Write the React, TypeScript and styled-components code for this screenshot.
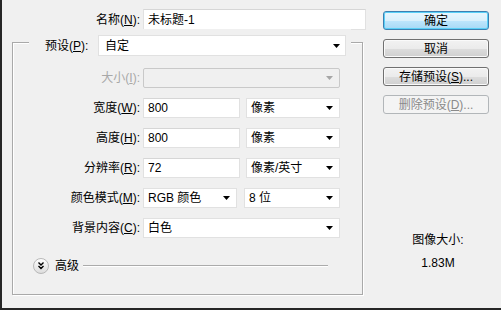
import React from "react";
import styled, { createGlobalStyle } from "styled-components";

const GlobalStyle = createGlobalStyle`
  html, body {
    margin: 0;
    padding: 0;
    background: #f0f0f0;
  }
  body {
    font-family: "Liberation Sans", "Noto Sans CJK SC", sans-serif;
    font-size: 12px;
    color: #000;
  }
`;

const Arrow = ({ disabled }: { disabled?: boolean }) => (
  <svg width="7" height="4" viewBox="0 0 7 4">
    <polygon points="0,0 7,0 3.5,4" fill={disabled ? "#a6a6a6" : "#000"} />
  </svg>
);

const AdvancedIcon = () => (
  <svg width="16" height="16" viewBox="0 0 16 16">
    <defs>
      <linearGradient id="adv" x1="0" y1="0" x2="0" y2="1">
        <stop offset="0" stopColor="#ffffff" />
        <stop offset="1" stopColor="#dcdcdc" />
      </linearGradient>
    </defs>
    <circle cx="8" cy="8" r="7.5" fill="url(#adv)" stroke="#b8b8b8" />
    <path d="M5.5 4.5 L8 7 L10.5 4.5 M5.5 8 L8 10.5 L10.5 8" fill="none" stroke="#000" strokeWidth="1.4" />
  </svg>
);

const Select = ({ value, disabled }: { value?: string; disabled?: boolean }) => (
  <SelectBox $disabled={disabled}>
    <SelectText>{value}</SelectText>
    <Arrow disabled={disabled} />
  </SelectBox>
);

export default function App() {
  return (
    <>
      <GlobalStyle />
      <Window>
        <LeftColumn>
          <NameRow>
            <Label>
              名称(<u>N</u>):
            </Label>
            <TextField>未标题-1</TextField>
          </NameRow>

          <GroupBox>
            <PresetLegend>
              <LegendLabel>
                预设(<u>P</u>):
              </LegendLabel>
              <PresetSelect>
                <SelectText>自定</SelectText>
                <Arrow />
              </PresetSelect>
            </PresetLegend>

            <FormGrid>
              <Label $disabled>
                大小(<u>I</u>):
              </Label>
              <Select disabled />

              <Label>
                宽度(<u>W</u>):
              </Label>
              <FieldPair $first={97} $gap={6}>
                <TextField>800</TextField>
                <Select value="像素" />
              </FieldPair>

              <Label>
                高度(<u>H</u>):
              </Label>
              <FieldPair $first={97} $gap={6}>
                <TextField>800</TextField>
                <Select value="像素" />
              </FieldPair>

              <Label>
                分辨率(<u>R</u>):
              </Label>
              <FieldPair $first={97} $gap={6}>
                <TextField>72</TextField>
                <Select value="像素/英寸" />
              </FieldPair>

              <Label>
                颜色模式(<u>M</u>):
              </Label>
              <FieldPair $first={94} $gap={7}>
                <Select value="RGB 颜色" />
                <Select value="8 位" />
              </FieldPair>

              <Label>
                背景内容(<u>C</u>):
              </Label>
              <Select value="白色" />

              <AdvancedRow>
                <AdvancedIcon />
                <AdvancedText>高级</AdvancedText>
                <EtchedLine />
              </AdvancedRow>
            </FormGrid>
          </GroupBox>
        </LeftColumn>

        <RightColumn>
          <Button $variant="primary">确定</Button>
          <Button>取消</Button>
          <Button>
            存储预设(<u>S</u>)...
          </Button>
          <Button $variant="disabled">
            删除预设(<u>D</u>)...
          </Button>

          <ImageSize>
            <SizeLine>图像大小:</SizeLine>
            <SizeValue>1.83M</SizeValue>
          </ImageSize>
        </RightColumn>
      </Window>
    </>
  );
}

// ── Styles ──────────────────────────────────────────────────────────

const Window = styled.div`
  width: 501px;
  height: 310px;
  box-sizing: border-box;
  border-left: 2px solid #262626;
  border-bottom: 2px solid #262626;
  background: #f0f0f0;
  display: flex;
  padding: 9px 0 0 10px;
`;

const LeftColumn = styled.div`
  width: 354px;
  display: flex;
  flex-direction: column;
`;

const NameRow = styled.div`
  display: grid;
  grid-template-columns: 128px 1fr;
  column-gap: 3px;
  align-items: center;
  height: 21px;
`;

const Label = styled.span<{ $disabled?: boolean }>`
  text-align: right;
  white-space: nowrap;
  line-height: 16px;
  color: ${(p) => (p.$disabled ? "#a8a8a8" : "#000")};
`;

const TextField = styled.div`
  box-sizing: border-box;
  height: 21px;
  background: #fff;
  border: 1px solid #e1e1e1;
  border-top-color: #d6d6d6;
  padding: 0 4px;
  display: flex;
  align-items: center;
  line-height: 16px;
  white-space: nowrap;
`;

const SelectBox = styled.div<{ $disabled?: boolean }>`
  box-sizing: border-box;
  height: 20px;
  background: ${(p) => (p.$disabled ? "#f0f0f0" : "#fff")};
  border: 1px solid ${(p) => (p.$disabled ? "#c9c9c9" : "#e1e1e1")};
  border-radius: ${(p) => (p.$disabled ? "2px" : "0")};
  padding: 0 6px 0 4px;
  display: flex;
  align-items: center;
  justify-content: space-between;
  line-height: 16px;
`;

const SelectText = styled.span`
  white-space: nowrap;
`;

const GroupBox = styled.fieldset`
  width: 351px;
  box-sizing: border-box;
  margin: -1px 0 0;
  padding: 0 0 20px;
  border: 1px solid #a9a9a9;
  box-shadow: inset 1px 1px 0 #fff, 1px 1px 0 #fff;
  min-inline-size: 0;
`;

const PresetLegend = styled.legend`
  margin-left: 16px;
  padding: 6px 5px 0 16px;
  display: flex;
  align-items: center;
  background: #f0f0f0;
`;

const LegendLabel = styled.span`
  width: 53px;
  text-align: left;
  white-space: nowrap;
  line-height: 16px;
`;

const PresetSelect = styled.div`
  box-sizing: border-box;
  width: 248px;
  height: 21px;
  background: #fff;
  border: 1px solid #e1e1e1;
  padding: 0 5px 0 6px;
  display: flex;
  align-items: center;
  justify-content: space-between;
  line-height: 16px;
`;

const FormGrid = styled.div`
  display: grid;
  grid-template-columns: 127px 197px;
  column-gap: 3px;
  row-gap: 10px;
  align-items: center;
  margin-top: 12px;

  > * {
    height: 20px;
  }
  > span {
    height: auto;
  }
`;

const FieldPair = styled.div<{ $first: number; $gap: number }>`
  display: grid;
  grid-template-columns: ${(p) => p.$first}px 1fr;
  column-gap: ${(p) => p.$gap}px;

  > div {
    height: 20px;
  }
`;

const AdvancedRow = styled.div`
  grid-column: 1 / -1;
  display: flex;
  align-items: center;
  margin: 10px 0 0 20px;
  height: 16px !important;

  svg {
    flex: none;
  }
`;

const AdvancedText = styled.span`
  margin-left: 6px;
  line-height: 16px;
`;

const EtchedLine = styled.div`
  width: 245px;
  margin-left: 4px;
  border-top: 1px solid #ababab;
  border-bottom: 1px solid #fff;
`;

const RightColumn = styled.div`
  width: 106px;
  margin-left: 17px;
  padding-top: 2px;
  display: flex;
  flex-direction: column;
  gap: 9px;
`;

const Button = styled.button<{ $variant?: "primary" | "disabled" }>`
  width: 106px;
  height: 19px;
  padding: 0;
  border-radius: 3px;
  font-family: inherit;
  font-size: 12px;
  line-height: 16px;
  color: ${(p) => (p.$variant === "disabled" ? "#8a8a8a" : "#000")};
  border: 1px solid
    ${(p) =>
      p.$variant === "primary"
        ? "#3c7fb1"
        : p.$variant === "disabled"
        ? "#b2b6b9"
        : "#707070"};
  background: ${(p) =>
    p.$variant === "primary"
      ? "linear-gradient(#eaf6fd 0%, #d9f0fc 50%, #bee6fd 51%, #a7d9f5 100%)"
      : p.$variant === "disabled"
      ? "#f4f4f4"
      : "linear-gradient(#f2f2f2 0%, #ebebeb 50%, #dddddd 51%, #cfcfcf 100%)"};
  box-shadow: ${(p) =>
    p.$variant === "primary"
      ? "inset 0 0 0 1px #5ad0f7"
      : p.$variant === "disabled"
      ? "none"
      : "inset 0 0 0 1px #fafafa"};
`;

const ImageSize = styled.div`
  margin-top: 109px;
  text-align: center;
  padding-left: 4px;
`;

const SizeLine = styled.div`
  line-height: 16px;
`;

const SizeValue = styled.div`
  margin-top: 7px;
  line-height: 16px;
`;
